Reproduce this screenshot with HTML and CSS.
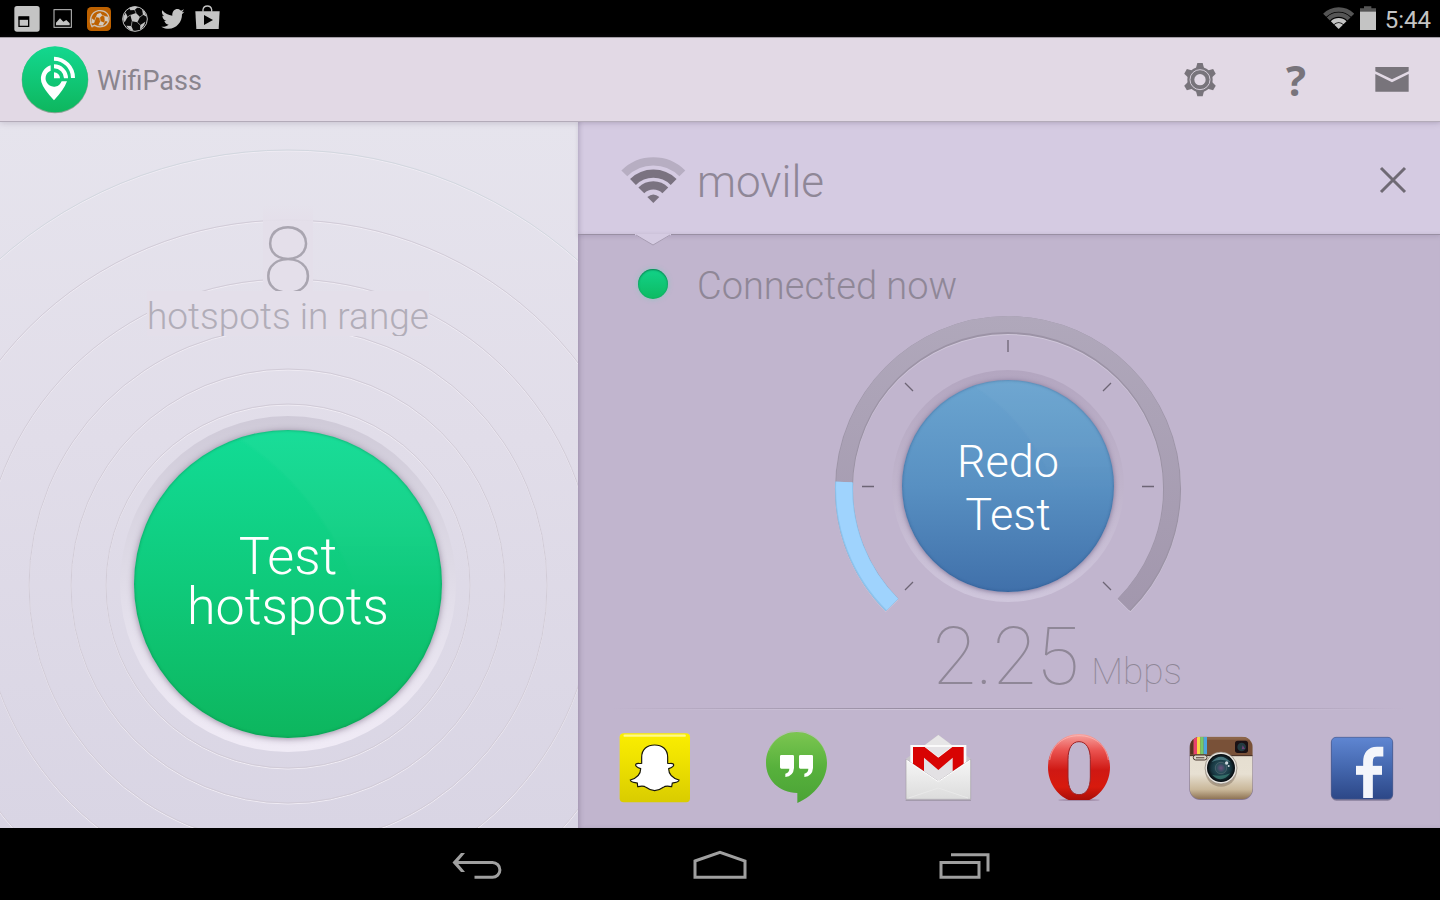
FILE: index.html
```html
<!DOCTYPE html>
<html lang="en">
<head>
<meta charset="utf-8">
<meta name="viewport" content="width=device-width, initial-scale=1">
<title>WifiPass</title>
<link rel="stylesheet" href="styles.css">
</head>
<body>
<div class="statusbar">
  <div class="notifications">
    <svg viewBox="27 0 108 111" aria-hidden="true"><rect x="43" y="18" width="76" height="77" rx="8" fill="#c4c4c4"/><path d="M57 51H86V79H57Z" fill="#c4c4c4" stroke="#000" stroke-width="4"/><path d="M56 55H87" stroke="#000" stroke-width="9"/></svg>
    <svg viewBox="135 0 108 111" aria-hidden="true"><rect x="162" y="29" width="52" height="53" fill="none" stroke="#c4c4c4" stroke-width="3"/><path d="M168 76V68L180 55L190 65L199 60L209 70V76Z" fill="#c4c4c4"/></svg>
    <svg viewBox="243 0 108 111" aria-hidden="true"><rect x="261" y="21" width="72" height="72" rx="13" fill="#bd6100"/><path d="M276 80C266 62 272 37 295 32C319 29 330 47 326 62C320 80 300 85 284 76L274 80Z" fill="none" stroke="#ccc1b4" stroke-width="4"/><g fill="#d3cbc0"><path d="M291 43L301 38L307 46L299 54L288 51Z"/><path d="M313 48L324 50V65L314 62Z"/><path d="M275 55L285 62L282 70L274 70Z"/><path d="M301 63L313 68L308 77L295 76Z"/></g><path d="M307 46L314 49M299 54L301 63M288 51L284 62M313 68L316 61" stroke="#d3cbc0" stroke-width="2"/></svg>
    <svg viewBox="351 0 108 111" aria-hidden="true"><circle cx="405" cy="57" r="37" fill="#080808" stroke="#c4c4c4" stroke-width="3"/><g fill="#c4c4c4"><path d="M391 45L408 39L420 51L412 67L396 64Z"/><path d="M388 24Q402 17 414 21L404 30L391 31Z"/><path d="M426 27Q437 36 440 50L429 44Z"/><path d="M370 50L377 38L383 51L374 67Q368 60 370 50Z"/><path d="M379 77L394 78L400 92Q386 90 379 77Z"/><path d="M421 75L436 65Q433 80 420 89Z"/></g><path d="M408 39L404 30M420 51L429 44M412 67L421 75M396 64L394 78M391 45L383 51" stroke="#c4c4c4" stroke-width="2"/></svg>
    <svg viewBox="459 0 108 111" aria-hidden="true"><path d="M487 31C495 41 505 46 517 47C515 29 533 21 543 32L552 28L546 37L553 35L546 43C547 73 516 99 484 80C493 81 501 78 506 74C499 73 495 69 493 63H499C492 61 487 54 487 47L493 49C486 44 484 37 487 31Z" fill="#c4c4c4"/></svg>
    <svg viewBox="567 0 108 111" aria-hidden="true"><path d="M609 35V29Q611 18 622 18Q633 18 635 29V35" fill="none" stroke="#c4c4c4" stroke-width="4"/><path d="M586 34H659L656 87H589Z" fill="#c4c4c4"/><path d="M612 45L639 60L612 75Z" fill="#000"/></svg>
  </div>
  <div class="system">
    <svg class="signal" viewBox="519 0 93 111" aria-hidden="true"><g fill="none" stroke-width="13"><path d="M524 46A59 59 0 0 1 608 46" stroke="#555"/><path d="M535 57A43 43 0 0 1 597 57" stroke="#555"/><path d="M547 68A27 27 0 0 1 585 68" stroke="#c4c4c4"/></g><path d="M566 87L553 74A19 19 0 0 1 579 74Z" fill="#c4c4c4"/></svg>
    <svg class="battery" viewBox="624 0 60 111" aria-hidden="true"><path d="M630 36V25H642V19H664V25H678V36Z" fill="#555"/><path d="M630 35H678V90H630Z" fill="#c4c4c4"/></svg>
    <time>5:44</time>
  </div>
</div>

<header class="appbar">
  <div class="brand">
    <svg viewBox="57 114 216 252" aria-hidden="true">
      <defs><linearGradient id="green" x1="0" y1="0" x2="0" y2="1"><stop offset="0" stop-color="#13d88f"/><stop offset="1" stop-color="#0eb65e"/></linearGradient></defs>
      <circle cx="165" cy="240" r="100" fill="#8aa595"/>
      <circle cx="165" cy="238" r="99" fill="url(#green)"/>
      <path d="M152 196A42 42 0 0 0 124 246Q130 267 162 301Q192 269 201 244H185A25 25 0 1 1 152 212Z" fill="#fff"/>
      <path d="M162 235V217A18 18 0 0 1 180 235Z" fill="#fff"/>
      <g fill="none" stroke="#fff" stroke-width="12"><path d="M162 199A36 36 0 0 1 198 235"/><path d="M162 176A58 58 0 0 1 219 234"/></g>
    </svg>
    <span>WifiPass</span>
  </div>
  <nav class="actions" aria-label="App">
    <button type="button" aria-label="Settings"><svg viewBox="6 114 288 252" aria-hidden="true"><g fill="#78747b"><path id="tooth" d="M137 208L142 189H158L163 208Z"/><use href="#tooth" transform="rotate(60 150 239)"/><use href="#tooth" transform="rotate(120 150 239)"/><use href="#tooth" transform="rotate(180 150 239)"/><use href="#tooth" transform="rotate(240 150 239)"/><use href="#tooth" transform="rotate(300 150 239)"/></g><circle cx="150" cy="239" r="38" fill="#78747b"/><circle cx="150" cy="239" r="30" fill="none" stroke="#d3cbd7" stroke-width="3"/><circle cx="150" cy="239" r="17" fill="#e2d9e5"/></svg></button>
    <button type="button" class="help" aria-label="Help">?</button>
    <button type="button" aria-label="Messages"><svg viewBox="582 114 288 252" aria-hidden="true"><path d="M676 201H776V214L726 238L676 214Z M676 222L726 247L776 222V275H676Z" fill="#78747b"/></svg></button>
  </nav>
</header>

<main class="content">
  <section class="radar">
    <p class="count">8</p>
    <p class="caption">hotspots in range</p>
    <div class="dial">
      <svg class="rings" viewBox="-440 -442 880 880" aria-hidden="true"><g fill="none" stroke="#f0ecf4" transform="translate(0 1)"><circle r="182"/><circle r="217"/><circle r="259"/><circle r="307"/><circle r="366"/><circle r="436"/></g><g fill="none" stroke="#d1cbd7"><circle r="182"/><circle r="217"/><circle r="259"/><circle r="307"/><circle r="366"/><circle r="436" stroke="#d2d7df"/></g></svg>
      <button type="button" class="round scan">Test<br>hotspots</button>
    </div>
  </section>

  <section class="network">
    <header class="network-head">
      <svg class="wifi" viewBox="111 6 216 330" aria-hidden="true"><g fill="none" stroke="#7a7280" stroke-width="25"><path d="M133 157A123 123 0 0 1 307 157" stroke="#b7aec2"/><path d="M159 183A87 87 0 0 1 281 183"/><path d="M184 208A51 51 0 0 1 256 208"/></g><path d="M220 246L202 228Q220 213 238 228Z" fill="#7a7280"/></svg>
      <h1>movile</h1>
      <button type="button" class="close" aria-label="Close"><svg viewBox="0 0 28 28" aria-hidden="true"><path d="M2 2L26 26M26 2L2 26" fill="none" stroke="#6f6a74" stroke-width="3"/></svg></button>
      <svg class="caret" viewBox="0 0 36 12" aria-hidden="true"><path d="M0 0H36V1L18 11L0 1Z" fill="#d5cbe2"/><path d="M1 1L18 11L35 1" fill="none" stroke="#a79cb2"/></svg>
    </header>
    <p class="state"><span class="dot"></span><span>Connected now</span></p>

    <div class="speed">
      <div class="gauge">
        <svg viewBox="832 315 352 300" role="img" aria-label="Connection speed">
          <defs>
            <linearGradient id="track" gradientUnits="userSpaceOnUse" x1="0" y1="315" x2="0" y2="612"><stop offset="0" stop-color="#b0a8bb"/><stop offset="1" stop-color="#a297ad"/></linearGradient>
          </defs>
          <path d="M892 605A164 164 0 1 1 1124 605" fill="none" stroke="#d0c7da" stroke-width="18" transform="translate(0 1)"/>
          <path d="M892 605A164 164 0 1 1 1124 605" fill="none" stroke="#9c93a6" stroke-width="18"/>
          <path d="M892.500 604.500A164 164 0 1 1 1123.500 604.500" fill="none" stroke="url(#track)" stroke-width="16"/>
          <path d="M892 605A164 164 0 0 1 844.200 482" fill="none" stroke="#8dc4ee" stroke-width="18"/>
          <path d="M892.500 604.500A164 164 0 0 1 844.200 482" fill="none" stroke="#9fd3fd" stroke-width="16"/>
          <path d="M1008 340V352M862 486.500H874M1142 486.500H1154M905 383L913 391M1111 383L1103 391M905 590L913 582M1111 590L1103 582" stroke="#6d6575" stroke-width="1.300"/>
        </svg>
        <div class="halo"><button type="button" class="round redo">Redo<br>Test</button></div>
      </div>
      <p class="reading"><span class="value">2.25</span> <span class="unit">Mbps</span></p>
    </div>

    <nav class="apps" aria-label="Apps">
      <a href="#snapchat" aria-label="Snapchat"><svg viewBox="57 90 216 228" aria-hidden="true"><defs><linearGradient id="yellow" x1="0" y1="0" x2="0" y2="1"><stop offset="0" stop-color="#fbee00"/><stop offset=".5" stop-color="#ebde00"/><stop offset="1" stop-color="#d9cc00"/></linearGradient></defs><rect x="59" y="100" width="211" height="207" rx="12" fill="url(#yellow)"/><path d="M74 107H254" stroke="#fff98a" stroke-width="7" stroke-linecap="round"/><path d="M125 172C125 147 142 135 164 135C186 135 203 147 203 172V190C207 192 215 188 220 192C224 197 216 203 206 206C206 222 218 234 237 240C236 248 226 247 217 249L215 260C205 258 197 256 190 262C182 268 174 272 164 272C154 272 146 268 138 262C131 256 123 258 113 260L112 249C102 247 92 248 91 240C110 234 122 222 122 206C112 203 104 197 108 192C113 188 121 192 125 190Z" fill="#fff" stroke="#17160a" stroke-width="3.500"/></svg></a>
      <a href="#hangouts" aria-label="Hangouts"><svg viewBox="480 90 216 228" aria-hidden="true"><defs><linearGradient id="leaf" x1="0" y1="0" x2="0" y2="1"><stop offset="0" stop-color="#7cc651"/><stop offset=".5" stop-color="#57b13c"/><stop offset="1" stop-color="#4ba336"/></linearGradient></defs><path d="M590 96C642 96 681 137 681 188C681 240 644 286 592 309V279C537 277 498 240 498 188C498 137 538 96 590 96Z" fill="url(#leaf)"/><path d="M507 153A87 87 0 0 1 673 153" fill="none" stroke="#9bd47a" stroke-width="2" opacity=".5"/><path id="quote" d="M540 169Q540 165 544 165H578Q582 165 582 169V204Q580 229 556 231V221Q568 218 568 206H544Q540 206 540 202Z" fill="#fff"/><use href="#quote" x="57"/></svg></a>
      <a href="#gmail" aria-label="Gmail"><svg viewBox="906 90 216 228" aria-hidden="true"><defs><linearGradient id="paper" x1="0" y1="0" x2="0" y2="1"><stop offset="0" stop-color="#f6f6f6"/><stop offset="1" stop-color="#dcdcdc"/></linearGradient></defs><path d="M917 301H1113" stroke="#9d94a5" stroke-width="3"/><path d="M918 176L1015 104L1112 176V298H918Z" fill="#c9c6cb"/><path d="M1015 105L974 136H1056Z" fill="#e7e6e7"/><path d="M931 135H1099V250H931Z" fill="#fafafa"/><path d="M972 172H1058V240H972Z" fill="#e3e1e4"/><path d="M939 141H974L1015 173L1057 141H1091V213H1058V173L1015 210L972 173V213H939Z" fill="#d80303"/><path d="M976 141H1054L1015 171Z" fill="#e5e3e6"/><path d="M918 178L1015 244L1112 178V298H918Z" fill="url(#paper)" stroke="#a6a2a8" stroke-width="2"/><path d="M920 181L1015 245L1110 181" fill="none" stroke="#fff" stroke-width="3"/><path d="M926 294L1015 264L1104 294" fill="none" stroke="#e9e9e9" stroke-width="3"/></svg></a>
      <a href="#opera" aria-label="Opera"><svg viewBox="72 90 216 228" aria-hidden="true"><defs><linearGradient id="red" x1="0" y1="0" x2="0" y2="1"><stop offset="0" stop-color="#f7a3a0"/><stop offset=".25" stop-color="#ea5350"/><stop offset=".55" stop-color="#cf1813"/><stop offset=".8" stop-color="#d81a0d"/><stop offset="1" stop-color="#a90d08"/></linearGradient></defs><ellipse cx="180" cy="300" rx="62" ry="3" fill="#8b7190" opacity=".6"/><path fill-rule="evenodd" d="M180 102C233 102 273 146 273 202C273 247 246 286 211 300H149C114 286 87 247 87 202C87 146 127 102 180 102ZM180 125C158 125 147 146 147 178V231C147 264 158 284 180 284C202 284 214 264 214 231V178C214 146 202 125 180 125Z" fill="url(#red)"/><path d="M180 125C158 125 147 146 147 178V231C147 264 158 284 180 284C202 284 214 264 214 231V178C214 146 202 125 180 125Z" fill="none" stroke="#9d2224" stroke-width="3"/><path d="M92 180C99 133 136 107 180 107C224 107 261 133 268 180" fill="none" stroke="#fbc3c0" stroke-width="3" opacity=".6"/></svg></a>
      <a href="#instagram" aria-label="Instagram"><svg viewBox="495 90 216 228" aria-hidden="true"><defs><linearGradient id="cream" x1="0" y1="0" x2="0" y2="1"><stop offset="0" stop-color="#e4ddcf"/><stop offset=".6" stop-color="#e7e0d2"/><stop offset=".85" stop-color="#c9b799"/><stop offset="1" stop-color="#8f7455"/></linearGradient><radialGradient id="lens"><stop offset="0" stop-color="#70507e"/><stop offset=".35" stop-color="#254d58"/><stop offset=".7" stop-color="#16343e"/><stop offset="1" stop-color="#06090c"/></radialGradient><clipPath id="body"><rect x="509" y="110" width="189" height="187" rx="32"/></clipPath></defs><rect x="508" y="111" width="191" height="189" rx="33" fill="#85778f"/><g clip-path="url(#body)"><path d="M509 110H698V297H509Z" fill="url(#cream)"/><path d="M509 110H698V167H509Z" fill="#795138"/><path d="M509 110H698V119H509Z" fill="#8c6549"/><path d="M511 110H520V163H511Z" fill="#553121"/><path d="M521 110H531V163H521Z" fill="#e9406b"/><path d="M531 110H541V163H531Z" fill="#f6d646"/><path d="M541 110H551V163H541Z" fill="#77c969"/><path d="M551 110H561V163H551Z" fill="#4ca5df"/><path d="M509 167H698" stroke="#412a20" stroke-width="3"/></g><rect x="520" y="165" width="41" height="15" rx="7" fill="#ddd5cb" stroke="#46352c" stroke-width="3"/><path d="M528 173H553" stroke="#75665c" stroke-width="4"/><rect x="645" y="122" width="39" height="37" rx="8" fill="#1a1114"/><circle cx="665" cy="141" r="13" fill="#233b40"/><path d="M668 136L675 147L665 148Z" fill="#6e4076"/><ellipse cx="603" cy="214" rx="47" ry="46" fill="#81705e" opacity=".5"/><circle cx="603" cy="204" r="48" fill="#e7e4df" stroke="#867b70" stroke-width="2"/><circle cx="603" cy="204" r="42" fill="url(#lens)"/><path d="M574 187Q602 153 632 187Q602 172 574 187Z" fill="#5b9298" opacity=".7"/><path d="M576 224Q604 253 631 220Q604 232 576 224Z" fill="#3e8378" opacity=".7"/><circle cx="603" cy="204" r="17" fill="none" stroke="#5a6973" stroke-width="2"/><circle cx="620" cy="189" r="5" fill="#cfdae0"/><circle cx="626" cy="198" r="3" fill="#cfdae0"/></svg></a>
      <a href="#facebook" aria-label="Facebook"><svg viewBox="918 90 216 228" aria-hidden="true"><defs><linearGradient id="blue" x1="0" y1="0" x2="0" y2="1"><stop offset="0" stop-color="#5f86d2"/><stop offset=".5" stop-color="#4467ae"/><stop offset="1" stop-color="#2c4787"/></linearGradient></defs><rect x="933" y="116" width="186" height="186" rx="16" fill="#6d6583" opacity=".7"/><rect x="934" y="112" width="184" height="185" rx="14" fill="url(#blue)" stroke="#40558d" stroke-width="2"/><g fill="none" stroke="#f4f6fb"><path d="M1044 294V186Q1044 155 1071 155H1090" stroke-width="29"/><path d="M1008 211H1086" stroke-width="27"/></g></svg></a>
    </nav>
  </section>
</main>

<nav class="navbar" aria-label="System">
  <button type="button" aria-label="Back"><svg viewBox="428 828 96 72" aria-hidden="true"><path d="M455 862.500H492.500A7.300 7.300 0 0 1 492.500 877.300H474.500" fill="none" stroke="#a0a0a0" stroke-width="3"/><path d="M461 853H465L457 862.500L465 872H461L452.500 862.500Z" fill="#a0a0a0"/></svg></button>
  <button type="button" aria-label="Home"><svg viewBox="672 828 96 72" aria-hidden="true"><path d="M695 861L720 852.300L745 861V877.300H695Z" fill="none" stroke="#a0a0a0" stroke-width="3"/></svg></button>
  <button type="button" aria-label="Recent apps"><svg viewBox="916 828 96 72" aria-hidden="true"><path d="M941 862.500H979V877.300H941ZM951 854.800H988V871.500" fill="none" stroke="#a0a0a0" stroke-width="3"/></svg></button>
</nav>
</body>
</html>
```
FILE: styles.css
```css
* {
  box-sizing: border-box;
}

body {
  margin: 0;
  min-height: 100vh;
  display: flex;
  flex-direction: column;
  background: #000;
  font-family: Roboto, "Liberation Sans", sans-serif;
  font-weight: 300;
}

h1,
p {
  margin: 0;
  font-weight: inherit;
}

button {
  margin: 0;
  padding: 0;
  border: 0;
  background: none;
  font: inherit;
  cursor: pointer;
}

svg {
  display: block;
}

/* Status bar */
.statusbar {
  height: 37px;
  padding: 0 9px;
  display: flex;
  justify-content: space-between;
}

.notifications,
.system {
  display: flex;
}

.notifications svg {
  width: 36px;
  height: 37px;
}

.signal {
  width: 31px;
  height: 37px;
}

.battery {
  width: 20px;
  height: 37px;
  margin: 0 7px 0 4px;
}

.system time {
  color: #c4c4c4;
  font-size: 24px;
  font-weight: 400;
  line-height: 40px;
}

/* App bar */
.appbar {
  position: relative;
  z-index: 1;
  height: 85px;
  padding-left: 19px;
  display: flex;
  justify-content: space-between;
  background: #e2d9e5;
  border-top: 1px solid #a39da5;
  border-bottom: 1px solid #b3abb9;
  box-shadow: 0 1px 6px rgba(80, 70, 95, .22);
}

.brand {
  display: flex;
  align-items: center;
  gap: 6px;
  color: #8a858e;
  font-size: 27px;
  font-weight: 400;
}

.brand span {
  padding-top: 2px;
}

.brand svg {
  width: 72px;
  height: 84px;
}

.actions {
  display: flex;
}

.actions button {
  width: 96px;
  height: 84px;
}

.actions svg {
  width: 96px;
  height: 84px;
}

.actions .help {
  color: #78747b;
  font-family: "Open Sans", sans-serif;
  font-size: 42px;
  font-weight: 700;
  line-height: 82px;
}

/* Two panes */
.content {
  flex: 1;
  display: grid;
  grid-template-columns: 289fr 431fr;
}

.radar {
  position: relative;
  isolation: isolate;
  overflow: hidden;
  padding: 83px 2px 76px 0;
  display: flex;
  flex-direction: column;
  align-items: center;
  background: linear-gradient(#e6e4ed, #e1dde9 45%, #d9d5e4);
  color: #b1adb8;
}

.count {
  height: 86px;
  overflow: hidden;
  background: linear-gradient(transparent, #e4dfea 20%);
  color: #a9a5b0;
  font-size: 93px;
  font-weight: 100;
  line-height: 114px;
}

.caption {
  height: 45px;
  margin-bottom: 80px;
  overflow: hidden;
  background: #e4dfea;
  font-size: 37px;
  line-height: 52px;
}

.dial {
  position: relative;
  padding: 14px;
  border-radius: 50%;
  background: linear-gradient(#cfcad8, #dedae6 45%, #e2deea 55%, #f0ebf6);
}

.rings {
  position: absolute;
  z-index: -1;
  top: 50%;
  left: 50%;
  width: 880px;
  height: 880px;
  transform: translate(-50%, -50%);
}

.round {
  position: relative;
  display: flex;
  align-items: center;
  justify-content: center;
  border-radius: 50%;
  color: #fff;
  font-weight: 300;
  text-align: center;
}

.round::before {
  content: "";
  position: absolute;
  inset: 0;
  border-radius: 50%;
  background: radial-gradient(circle at -16% 81%, transparent 65%, rgba(255, 255, 255, .03) 66%);
  mask-image: linear-gradient(#000, #000 30%, transparent 55%);
}

.scan {
  width: 308px;
  height: 308px;
  padding-bottom: 4px;
  background: linear-gradient(#12dc96, #0fca7b 50%, #0db65e);
  box-shadow: 0 1px 6px rgba(70, 50, 80, .5), inset 0 0 3px rgba(0, 110, 60, .6);
  font-size: 52px;
  line-height: 50px;
}

/* Network pane */
.network {
  min-width: 0;
  display: flex;
  flex-direction: column;
  background: #c1b5ce;
  box-shadow: inset 3px 0 5px -2px rgba(80, 65, 100, .35);
}

.network-head {
  position: relative;
  height: 113px;
  padding-left: 39px;
  display: flex;
  align-items: center;
  gap: 8px;
  background: #d5cbe2;
  border-bottom: 1px solid #998fa3;
  box-shadow: inset 3px 0 5px -2px rgba(80, 65, 100, .3), 0 2px 4px rgba(90, 75, 110, .15);
  color: #8f8797;
}

.wifi {
  width: 72px;
  height: 110px;
}

.network-head h1 {
  flex: 1;
  padding-top: 8px;
  font-size: 44px;
  line-height: 53px;
}

.close {
  width: 94px;
  height: 112px;
  padding-top: 4px;
  display: flex;
  align-items: center;
  justify-content: center;
}

.close svg {
  width: 28px;
  height: 28px;
}

.caret {
  position: absolute;
  top: 112px;
  left: 57px;
  width: 36px;
  height: 12px;
}

.state {
  height: 80px;
  padding: 22px 0 0 60px;
  display: flex;
  align-items: center;
  gap: 29px;
  color: #8f8797;
  font-size: 38px;
  line-height: 44px;
}

.dot {
  width: 30px;
  height: 30px;
  margin-top: -4px;
  border-radius: 50%;
  background: linear-gradient(#12d389, #0dba62);
  box-shadow: 0 0 5px rgba(130, 200, 190, .8), inset 0 1px 2px rgba(0, 90, 50, .7);
}

.state,
.speed {
  flex: none;
}

.speed {
  align-self: center;
  width: 352px;
  margin-right: 2px;
}

.gauge {
  display: grid;
  justify-items: center;
}

.gauge > * {
  grid-area: 1 / 1;
}

.gauge svg {
  width: 352px;
  height: 300px;
}

.halo {
  align-self: start;
  margin-top: 55px;
  padding: 10px;
  border-radius: 50%;
  background: linear-gradient(#b3a6c0, #c0b4cc 50%, #cfc6dc);
}

.redo {
  width: 212px;
  height: 212px;
  padding-top: 4px;
  background: linear-gradient(#6ba5d0, #5890c2 50%, #4070aa);
  box-shadow: 0 1px 5px rgba(60, 45, 90, .5), inset 0 0 3px rgba(25, 60, 110, .5);
  font-size: 45px;
  line-height: 53px;
}

.reading {
  height: 93px;
  padding: 2px 2px 0 0;
  display: flex;
  align-items: baseline;
  justify-content: flex-end;
  gap: 12px;
  color: #8f8797;
  font-weight: 100;
}

.value {
  font-size: 79px;
  line-height: 80px;
}

.unit {
  font-size: 37px;
  line-height: 44px;
}

.apps {
  flex: 1;
  padding: 0 42px 0 41px;
  display: flex;
  align-items: center;
  justify-content: space-between;
  background:
    linear-gradient(90deg, transparent 4%, #958b9f 40%, #958b9f 60%, transparent 96%) top / 100% 1px no-repeat,
    linear-gradient(90deg, transparent 4%, #d0c6da 40%, #d0c6da 60%, transparent 96%) 0 1px / 100% 1px no-repeat;
}

.apps svg {
  width: 72px;
  height: 76px;
}

/* Navigation bar */
.navbar {
  height: 72px;
  display: flex;
  justify-content: center;
  gap: 148px;
}

.navbar svg {
  width: 96px;
  height: 72px;
}
```
